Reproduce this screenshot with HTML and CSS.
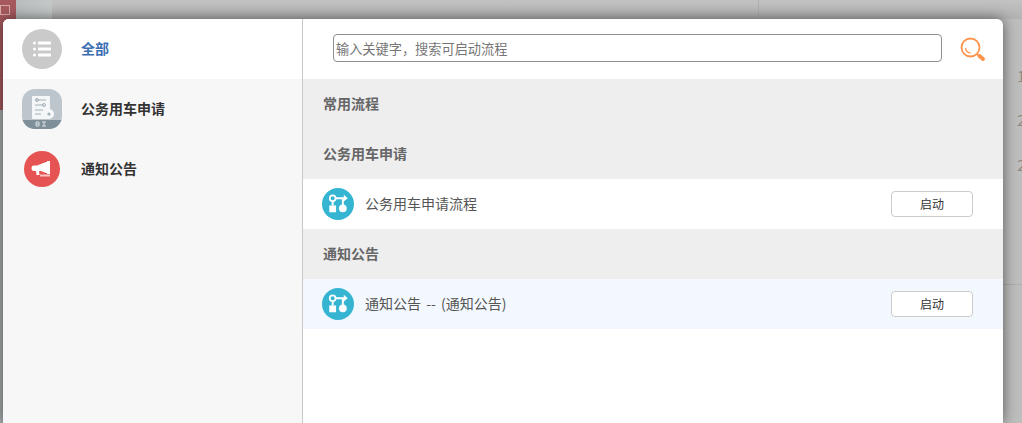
FILE: index.html
```html
<!DOCTYPE html>
<html lang="zh-CN">
<head>
<meta charset="utf-8">
<title>发起流程</title>
<link rel="stylesheet" href="styles.css">
</head>
<body>
<div class="backdrop">
  <div class="bg-red"><span class="bg-stamp"></span></div>
  <div class="bg-strip"></div>
  <div class="bg-top"></div>
  <div class="bg-light"></div>
  <div class="bg-vline"></div>
  <div class="bg-hline"></div>
  <span class="bg-num n1">1</span>
  <span class="bg-num n2">2</span>
  <span class="bg-num n3">2</span>
</div>
<div class="modal">
  <aside class="sidebar">
    <div class="cat active">
      <span class="cat-icon">
        <svg width="40" height="40" viewBox="0 0 40 40"><circle cx="20" cy="20" r="20" fill="#cacaca"/><g fill="#fff"><circle cx="12.500" cy="14" r="1.500"/><circle cx="12.500" cy="20" r="1.500"/><circle cx="12.500" cy="26" r="1.500"/><rect x="16" y="12.600" width="13" height="2.800" rx=".6"/><rect x="16" y="18.600" width="13" height="2.800" rx=".6"/><rect x="16" y="24.600" width="13" height="2.800" rx=".6"/></g></svg>
      </span>
      <span class="cat-name">全部</span>
    </div>
    <div class="cat">
      <span class="cat-icon">
        <svg width="40" height="40" viewBox="0 0 40 40"><defs><clipPath id="sq"><rect width="40" height="40" rx="13"/></clipPath></defs><g clip-path="url(#sq)"><rect width="40" height="40" fill="#bcc6cc"/><rect y="31" width="40" height="9" fill="#7f8f99"/></g><rect x="10" y="7" width="18" height="23" rx="1" fill="#f4f6f7"/><g fill="none" stroke="#a4b0b8" stroke-width="1"><path d="M13 11h11M13 16h9M13 21h8M13 25h6"/><circle cx="15" cy="11" r="1.500"/><circle cx="22" cy="16" r="1.500"/></g><circle cx="27" cy="25" r="5" fill="#f4f6f7"/><circle cx="27" cy="25" r="1.600" fill="#a4b0b8"/><g fill="none" stroke="#d6dde1" stroke-width="1"><path d="M14 33v4h3v-4zM14 35h3M20 33h4M22 33v4M20 37h4"/></g></svg>
      </span>
      <span class="cat-name">公务用车申请</span>
    </div>
    <div class="cat">
      <span class="cat-icon">
        <svg width="36" height="36" viewBox="0 0 36 36"><circle cx="18" cy="18" r="18" fill="#e55353"/><path d="M9.500 14.500h3.500l9-3.500h1v-1h3v13h-3v-1h-1l-5-2h-7.500a2.500 2.500 0 0 1-2-2.500v-.5a2.500 2.500 0 0 1 2-2.500z" fill="#fff"/><path d="M12 20h3l.5 4h-3z" fill="#fff"/><rect x="16" y="23.500" width="10" height="2" fill="#f6c4c4"/></svg>
      </span>
      <span class="cat-name">通知公告</span>
    </div>
  </aside>
  <main class="content">
    <div class="search">
      <input class="search-input" type="text" placeholder="输入关键字，搜索可启动流程">
      <svg class="search-icon" width="26" height="26" viewBox="0 0 26 26" fill="none" stroke="#ff944d"><circle cx="10.500" cy="10.500" r="9" stroke-width="1.800"/><path d="M5.500 11a5.500 5.500 0 0 0 5 5" stroke-width="1.400"/><path d="M17 17l2 2" stroke-width="1.800"/><path d="M19.500 19l3.500 3" stroke-width="4" stroke-linecap="round"/></svg>
    </div>
    <h3 class="section">常用流程</h3>
    <h3 class="section">公务用车申请</h3>
    <div class="row">
      <svg class="flow" width="32" height="32" viewBox="0 0 33 33"><circle cx="16.500" cy="16.500" r="16.500" fill="#36b5d3"/><g fill="#fff"><rect x="7.500" y="18" width="7" height="7"/><circle cx="21.500" cy="21" r="4"/><path d="M20.500 11h2v7h-2zM14 9.500h9v2h-9zM22.500 7l4 3.500-4 3.500z"/><rect x="10" y="14" width="2" height="4"/></g><circle cx="11" cy="10.500" r="3" fill="none" stroke="#fff" stroke-width="1.800"/></svg>
      <span class="row-name">公务用车申请流程</span>
      <button class="start" type="button">启动</button>
    </div>
    <h3 class="section">通知公告</h3>
    <div class="row hover">
      <svg class="flow" width="32" height="32" viewBox="0 0 33 33"><circle cx="16.500" cy="16.500" r="16.500" fill="#36b5d3"/><g fill="#fff"><rect x="7.500" y="18" width="7" height="7"/><circle cx="21.500" cy="21" r="4"/><path d="M20.500 11h2v7h-2zM14 9.500h9v2h-9zM22.500 7l4 3.500-4 3.500z"/><rect x="10" y="14" width="2" height="4"/></g><circle cx="11" cy="10.500" r="3" fill="none" stroke="#fff" stroke-width="1.800"/></svg>
      <span class="row-name">通知公告 -- (通知公告)</span>
      <button class="start" type="button">启动</button>
    </div>
  </main>
</div>
</body>
</html>
```

FILE: styles.css
```css
* { box-sizing: border-box; }
html, body { margin: 0; height: 100%; overflow: hidden; }
body {
  background: #bdbdbd;
  font-family: "Noto Sans CJK SC", "Liberation Sans", sans-serif;
  font-size: 13px;
  color: #333;
  padding: 19px 19px 0 3px;
}
.backdrop { position: absolute; inset: 0; overflow: hidden; }
.bg-top { position: absolute; left: 16px; top: 0; right: 0; height: 19px; background: linear-gradient(#c2c2c2, #b2b2b2); }
.bg-light { position: absolute; left: 16px; top: 0; width: 36px; height: 19px; background: linear-gradient(90deg, #b8bcbc, #c4c8c8); }
.bg-red { position: absolute; left: 0; top: 0; width: 16px; height: 110px; background: #a65a5e; }
.bg-stamp { position: absolute; left: 0; top: 5px; width: 10px; height: 10px; border: 1px solid #d9a9ab; }
.bg-strip { position: absolute; left: 0; top: 110px; width: 3px; bottom: 0; background: #a9adad; }
.bg-vline { position: absolute; left: 758px; top: 0; width: 1px; height: 19px; background: #aeaeae; }
.bg-hline { position: absolute; left: 1003px; right: 0; top: 284px; height: 1px; background: #adadad; }
.bg-num { position: absolute; left: 1017px; font-size: 15px; line-height: 20px; color: #8f8a85; }
.n1 { top: 66px; }
.n2 { top: 110px; }
.n3 { top: 155px; }
.modal {
  position: relative;
  display: flex;
  width: 1000px;
  height: 100%;
  background: #fff;
  border-radius: 6px 6px 0 0;
  box-shadow: 0 0 14px rgba(0, 0, 0, .55);
}
.sidebar {
  width: 300px;
  flex: none;
  background: #f7f7f7;
  border-right: 1px solid #c8c8c8;
  border-top-left-radius: 6px;
}
.cat {
  display: flex;
  align-items: center;
  height: 60px;
  padding-left: 19px;
}
.cat.active { background: #fff; border-top-left-radius: 6px; }
.cat-icon { display: flex; width: 40px; height: 40px; flex: none; align-items: center; justify-content: center; }
.cat-icon svg { display: block; }
.cat-name { margin: 0 0 2px 19px; font-size: 14px; line-height: 20px; font-weight: 700; color: #333; }
.active .cat-name { color: #3c6eb4; }
.content { flex: 1; min-width: 0; }
.search {
  display: flex;
  align-items: center;
  height: 60px;
  padding: 0 0 2px 30px;
}
.search-input {
  width: 609px;
  height: 28px;
  padding: 0 2px;
  border: 1px solid #8f8f8f;
  border-radius: 4px;
  outline: none;
  font: 13.2px "Noto Sans CJK SC", "Liberation Sans", sans-serif;
  color: #333;
  background: #fff;
}
.search-input::placeholder { color: #757575; opacity: 1; }
.search-icon { margin: 4px 0 0 18px; flex: none; }
.section {
  margin: 0;
  height: 50px;
  padding-left: 20px;
  line-height: 48px;
  background: #eee;
  font-size: 14px;
  font-weight: 700;
  color: #666;
}
.row {
  display: flex;
  align-items: center;
  height: 50px;
  padding: 0 30px 0 19px;
  background: #fff;
}
.row.hover { background: #f3f8fe; }
.flow { flex: none; }
.row-name { margin: 0 0 2px 11px; font-size: 14px; line-height: 20px; color: #555; flex: 1; word-spacing: 2px; }
.start {
  width: 82px;
  height: 26px;
  padding: 0 0 2px;
  border: 1px solid #ccc;
  border-radius: 4px;
  background: #fff;
  font: 12px "Noto Sans CJK SC", "Liberation Sans", sans-serif;
  color: #333;
}
```
